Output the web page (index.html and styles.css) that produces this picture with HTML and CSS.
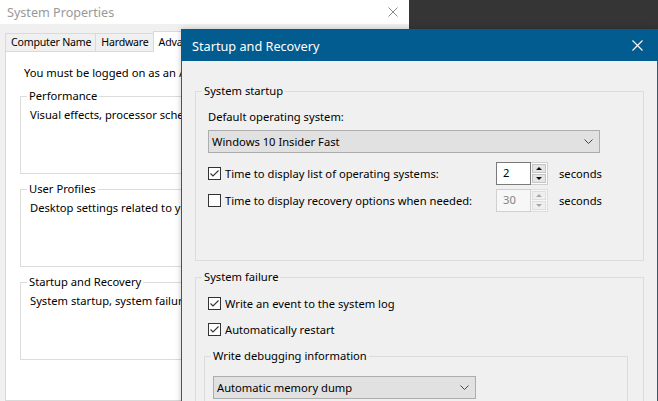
FILE: index.html
```html
<!DOCTYPE html>
<html>
<head>
<meta charset="utf-8">
<link rel="stylesheet" href="styles.css">
</head>
<body>
<div class="desktop">
  <div class="sysprops">
    <div class="sp-title">
      <span>System Properties</span>
      <svg class="sp-close" width="10" height="10" viewBox="0 0 10 10"><path d="M0.5 0.5 L9.5 9.5 M9.5 0.5 L0.5 9.5" stroke="#8a8a8a" stroke-width="1" fill="none"/></svg>
    </div>
    <div class="sp-tabs">
      <div class="tab">Computer Name</div>
      <div class="tab">Hardware</div>
      <div class="tab active">Advanced</div>
      <div class="tab">System Protection</div>
      <div class="tab">Remote</div>
    </div>
    <div class="panel">
      <p class="note">You must be logged on as an Administrator to make most of these changes.</p>
      <fieldset class="grp">
        <legend>Performance</legend>
        <p>Visual effects, processor scheduling, memory usage, and virtual memory</p>
      </fieldset>
      <fieldset class="grp">
        <legend>User Profiles</legend>
        <p>Desktop settings related to your sign-in</p>
      </fieldset>
      <fieldset class="grp">
        <legend>Startup and Recovery</legend>
        <p>System startup, system failure, and debugging information</p>
      </fieldset>
    </div>
  </div>

  <div class="dialog">
    <div class="dlg-title">
      <span>Startup and Recovery</span>
      <svg width="11" height="11" viewBox="0 0 11 11"><path d="M0.5 0.5 L10.5 10.5 M10.5 0.5 L0.5 10.5" stroke="#ffffff" stroke-width="1.1" fill="none"/></svg>
    </div>
    <div class="dlg-body">
      <fieldset class="dgrp startup">
        <legend>System startup</legend>
        <p class="lbl">Default operating system:</p>
        <div class="combo combo-os">
          <span>Windows 10 Insider Fast</span>
          <svg width="9" height="5" viewBox="0 0 9 5"><path d="M0.5 0.5 L4.5 4.5 L8.5 0.5" stroke="#444" stroke-width="1" fill="none"/></svg>
        </div>
        <div class="row row1">
          <div class="chk">
            <span class="box"><svg width="11" height="11" viewBox="0 0 11 11"><path d="M1.5 5.5 L4 8 L9.5 2.5" stroke="#333" stroke-width="1.1" fill="none"/></svg></span>
            <span>Time to display list of operating systems:</span>
          </div>
          <div class="spin">
            <div class="spin-input">2</div>
            <div class="spin-btns">
              <div class="spin-btn"><span class="tri-up"></span></div>
              <div class="spin-btn"><span class="tri-down"></span></div>
            </div>
          </div>
          <span>seconds</span>
        </div>
        <div class="row row2">
          <div class="chk">
            <span class="box"></span>
            <span>Time to display recovery options when needed:</span>
          </div>
          <div class="spin disabled">
            <div class="spin-input">30</div>
            <div class="spin-btns">
              <div class="spin-btn"><span class="tri-up"></span></div>
              <div class="spin-btn"><span class="tri-down"></span></div>
            </div>
          </div>
          <span>seconds</span>
        </div>
      </fieldset>

      <fieldset class="dgrp failure">
        <legend>System failure</legend>
        <div class="frow">
          <span class="box"><svg width="11" height="11" viewBox="0 0 11 11"><path d="M1.5 5.5 L4 8 L9.5 2.5" stroke="#333" stroke-width="1.1" fill="none"/></svg></span>
          <span>Write an event to the system log</span>
        </div>
        <div class="frow">
          <span class="box"><svg width="11" height="11" viewBox="0 0 11 11"><path d="M1.5 5.5 L4 8 L9.5 2.5" stroke="#333" stroke-width="1.1" fill="none"/></svg></span>
          <span>Automatically restart</span>
        </div>
        <fieldset class="sub">
          <legend>Write debugging information</legend>
          <div class="combo combo-dump">
            <span>Automatic memory dump</span>
            <svg width="9" height="5" viewBox="0 0 9 5"><path d="M0.5 0.5 L4.5 4.5 L8.5 0.5" stroke="#444" stroke-width="1" fill="none"/></svg>
          </div>
        </fieldset>
      </fieldset>
    </div>
  </div>
</div>
</body>
</html>
```

FILE: styles.css
```css
* { box-sizing: border-box; }

body {
  margin: 0;
  font-family: "Noto Sans", "Liberation Sans", sans-serif;
  font-size: 11.2px;
  color: #000;
}

p { margin: 0; }

.desktop {
  width: 658px;
  height: 401px;
  position: relative;
  overflow: hidden;
  background: #353535;
}

/* Background window: System Properties */
.sysprops {
  width: 409px;
  height: 401px;
  background: #f0f0f0;
  display: flex;
  flex-direction: column;
  overflow: hidden;
  white-space: nowrap;
}

.sp-title {
  height: 24px;
  flex-shrink: 0;
  background: #fff;
  display: flex;
  align-items: center;
  justify-content: space-between;
  padding: 0 11px 0 7px;
  color: #999;
  font-size: 12.6px;
}

.sp-tabs {
  display: flex;
  align-items: flex-end;
  padding: 7px 0 0 5px;
  flex-shrink: 0;
  font-size: 10.6px;
  letter-spacing: -0.2px;
}

.tab {
  height: 18px;
  line-height: 17px;
  padding: 0 4px 0 5px;
  border: 1px solid #d9d9d9;
  border-bottom: none;
  background: #f0f0f0;
  margin-left: -1px;
}

.tab:first-child { margin-left: 0; }

.tab.active {
  height: 21px;
  line-height: 20px;
  background: #fff;
  margin-bottom: -1px;
  position: relative;
  z-index: 1;
}

.panel {
  flex: 1;
  margin: 0 5px;
  background: #fff;
  border: 1px solid #d9d9d9;
  padding: 13px 0 0 14px;
}

.note {
  margin-left: 4px;
  line-height: 16px;
}

.grp {
  margin: 7px 0 0 0;
  padding: 0 0 0 9px;
  border: 1px solid #dcdcdc;
  height: 86px;
  min-width: 0;
}

.grp legend {
  margin-left: -3px;
  padding: 0 2px;
  line-height: 16px;
}

.grp p {
  margin-top: 3px;
  line-height: 16px;
}

/* Foreground dialog: Startup and Recovery */
.dialog {
  position: absolute;
  z-index: 5;
  left: 181px;
  top: 29px;
  width: 477px;
  height: 380px;
  background: #f0f0f0;
  border: 1px solid #1f5f8e;
  border-top: none;
  box-shadow: 0 0 6px rgba(0, 0, 0, 0.22);
  display: flex;
  flex-direction: column;
  white-space: nowrap;
}

.dlg-title {
  height: 32px;
  flex-shrink: 0;
  margin: 0 -1px;
  background: #025c8f;
  color: #fff;
  font-size: 12.7px;
  display: flex;
  align-items: center;
  justify-content: space-between;
  padding: 1px 15px 0 11px;
}

.dlg-body {
  padding: 22px 13px 0 13px;
}

.dgrp {
  margin: 0;
  padding: 0 12px;
  border: 1px solid #dcdcdc;
  min-width: 0;
}

.dgrp > legend,
.sub > legend {
  padding: 0 2px;
  line-height: 16px;
}

.dgrp > legend { margin-left: -6px; }

.startup { height: 178px; }

.lbl {
  margin-top: 10px;
  line-height: 16px;
}

.combo {
  height: 23px;
  border: 1px solid #adadad;
  background: #e1e1e1;
  display: flex;
  align-items: center;
  justify-content: space-between;
  padding: 0 6px 0 3px;
}

.combo-os {
  margin-top: 5px;
  width: 392px;
}

.row {
  display: grid;
  grid-template-columns: 277px 52px auto;
  column-gap: 11px;
  align-items: center;
  height: 23px;
}

.row1 { margin-top: 9px; }
.row2 { margin-top: 4px; }

.chk,
.frow {
  display: flex;
  align-items: center;
  gap: 4px;
}

.box {
  width: 13px;
  height: 13px;
  flex-shrink: 0;
  border: 1px solid #333;
  background: #fff;
  display: block;
}

.box svg { display: block; }

.spin {
  display: flex;
  width: 52px;
  height: 23px;
}

.spin-input {
  width: 35px;
  border: 1px solid #7a7a7a;
  background: #fff;
  padding: 2px 0 0 6px;
  line-height: 16px;
}

.spin-btns {
  width: 17px;
  border: 1px solid #cfcfcf;
  border-left: none;
  background: #fff;
  padding: 1px;
  display: flex;
  flex-direction: column;
  gap: 1px;
}

.spin-btn {
  flex: 1;
  background: #e5e5e5;
  border: 1px solid #c4c4c4;
  display: flex;
  align-items: center;
  justify-content: center;
}

.tri-up {
  width: 0;
  height: 0;
  border-left: 3px solid transparent;
  border-right: 3px solid transparent;
  border-bottom: 3px solid #111;
}

.tri-down {
  width: 0;
  height: 0;
  border-left: 3px solid transparent;
  border-right: 3px solid transparent;
  border-top: 3px solid #111;
}

.spin.disabled .spin-input {
  border-color: #d0d0d0;
  background: #f7f7f7;
  color: #838383;
}

.spin.disabled .spin-btns { border-color: #dedede; background: #f7f7f7; }
.spin.disabled .spin-btn { background: #efefef; border-color: #dedede; }
.spin.disabled .tri-up { border-bottom-color: #a8a8a8; }
.spin.disabled .tri-down { border-top-color: #a8a8a8; }

.failure {
  margin-top: 8px;
  height: 200px;
}

.frow {
  height: 16px;
  margin-top: 10px;
}

.sub {
  margin: 11px 0 0 -4px;
  width: 424px;
  height: 80px;
  padding: 0 0 0 8px;
  border: 1px solid #dcdcdc;
  min-width: 0;
}

.sub > legend { margin-left: -2px; }

.combo-dump {
  margin-top: 12px;
  width: 263px;
}
```
